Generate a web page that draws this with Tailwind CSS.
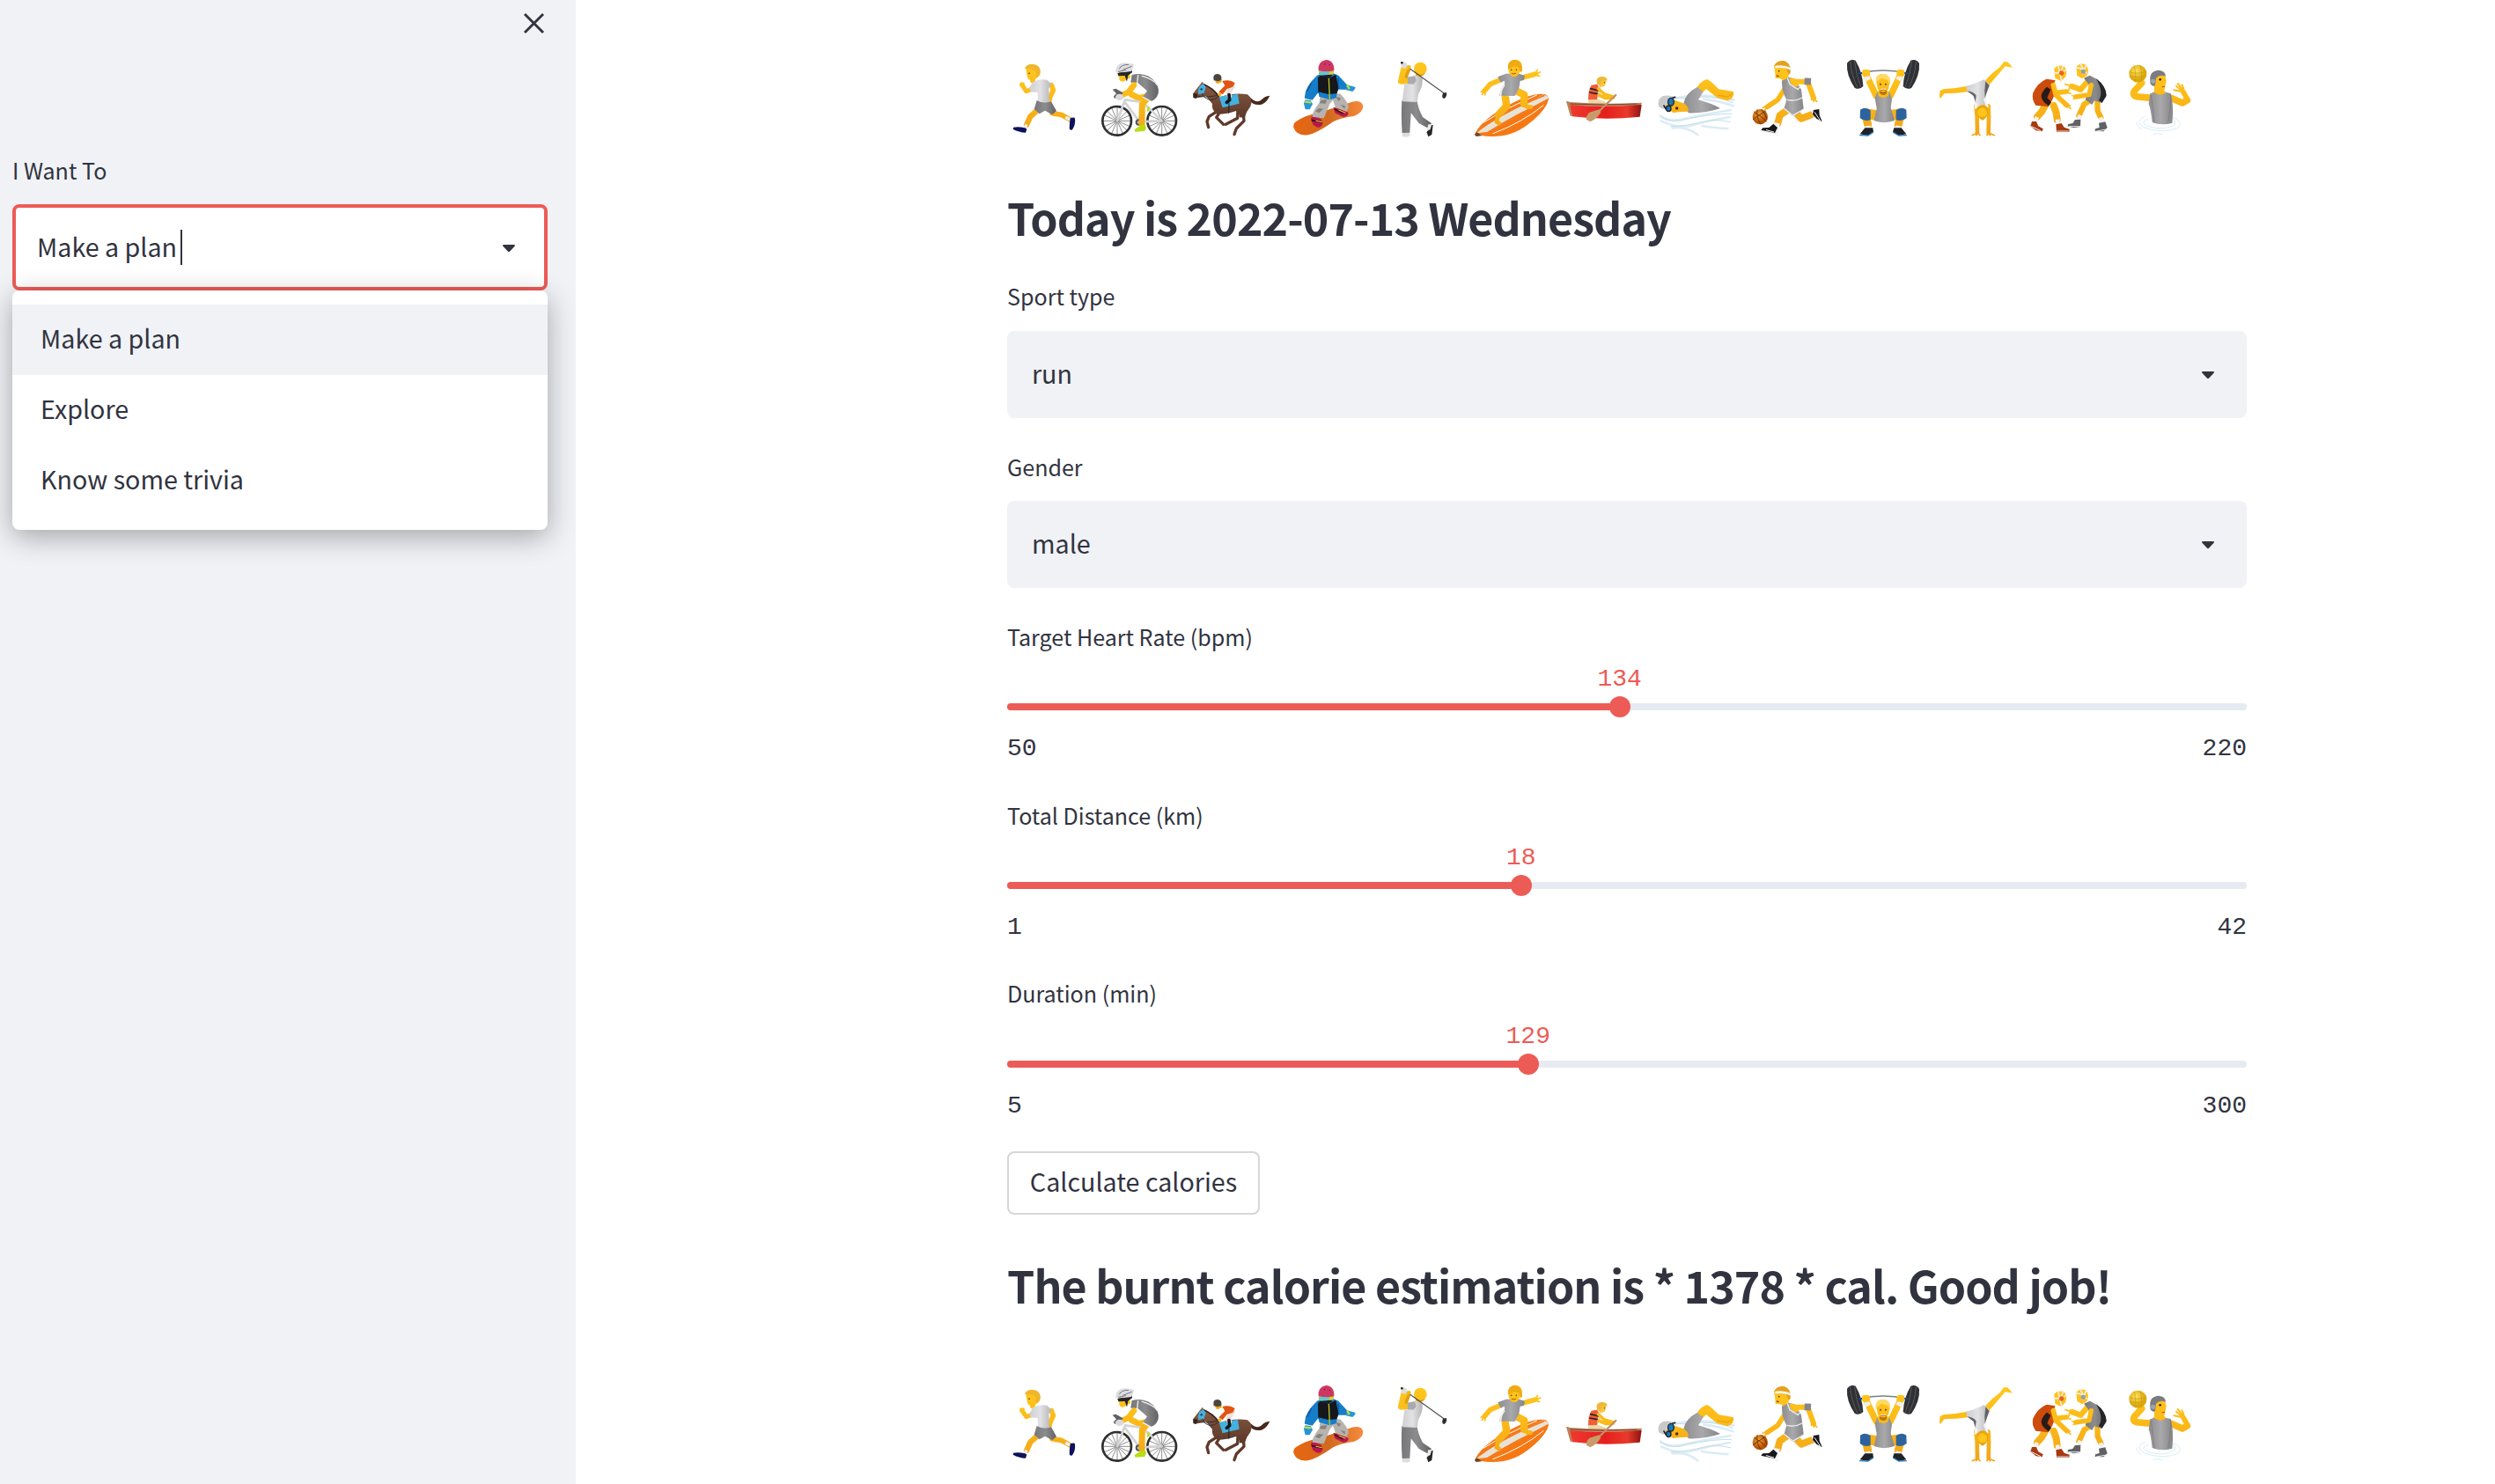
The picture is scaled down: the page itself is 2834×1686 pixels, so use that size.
<!DOCTYPE html>
<html lang="en">
<head>
<meta charset="utf-8">
<title>Workout planner</title>
<script src="https://cdn.jsdelivr.net/npm/@tailwindcss/browser@4"></script>
</head>
<body class="bg-white">
<div class="flex h-[1686px] w-[2834px] overflow-hidden font-['Noto_Sans_CJK_SC',sans-serif] text-[#31333f]">

  <!-- Sidebar -->
  <aside class="flex w-[654px] shrink-0 flex-col bg-[#f0f2f6] pl-[14px] pr-8">
    <div class="flex h-[171px] justify-end pt-[14px]">
      <svg class="mr-[3px] h-[25px] w-[25px]" viewBox="0 0 25 25" fill="none" stroke="#31333f" stroke-width="2.9"><path d="M2 2L23 23M23 2L2 23"/></svg>
    </div>
    <div class="h-[44px] text-[25.07px] leading-[44px]">I Want To</div>
    <div class="relative mt-[17px] flex h-[98px] items-center justify-between rounded-lg border-4 border-[#ed5b56] bg-white pl-[24px] pr-[33px]">
      <div class="flex items-center">
        <span class="-mt-[3px] text-[28.66px] leading-[44px]">Make a plan</span>
        <span class="ml-[4px] h-[40px] w-[2px] bg-[#31333f]"></span>
      </div>
      <svg class="mt-[3px] h-[9px] w-[14px]" viewBox="0 0 14 9"><path fill="#31333f" d="M1 0H13Q14.6 .5 13.4 2L8.200 7.600Q7 8.800 5.800 7.600L.6 2Q-.6 .5 1 0Z"/></svg>
      <ul class="absolute -left-1 top-[94px] w-[608px] rounded-lg bg-white py-4 text-[28.66px] shadow-[0_8px_32px_rgba(0,0,0,0.32)]">
        <li class="h-20 bg-[#f0f2f6] pl-[32px] leading-[76px]">Make a plan</li>
        <li class="h-20 pl-[32px] leading-[76px]">Explore</li>
        <li class="h-20 pl-[32px] leading-[76px]">Know some trivia</li>
      </ul>
    </div>
  </aside>

  <!-- Main column -->
  <main class="flex flex-col pl-[490px] pt-[50px]">
    <div class="flex h-[120px] w-[1408px]">
      <svg class="h-[120px] w-[105px] shrink-0" viewBox="42 0 315 360">
        <defs>
          <linearGradient id="skin" gradientUnits="userSpaceOnUse" x1="0" y1="50" x2="0" y2="320"><stop offset="0" stop-color="#ffc81e"/><stop offset=".5" stop-color="#fbb917"/><stop offset="1" stop-color="#f0a31a"/></linearGradient>
          <linearGradient id="shirt" x1="0" y1="0" x2="1" y2="0"><stop offset="0" stop-color="#cfcfd2"/><stop offset=".5" stop-color="#e2e2e4"/><stop offset="1" stop-color="#b5b5b8"/></linearGradient>
          <linearGradient id="grey" x1="0" y1="0" x2="1" y2="0"><stop offset="0" stop-color="#8d8d90"/><stop offset=".5" stop-color="#a9a9ac"/><stop offset="1" stop-color="#858588"/></linearGradient>
          <linearGradient id="dark" x1="0" y1="0" x2="1" y2="0"><stop offset="0" stop-color="#77777a"/><stop offset=".5" stop-color="#8c8c8f"/><stop offset="1" stop-color="#626265"/></linearGradient>
          <linearGradient id="horse" x1="0" y1="0" x2="0" y2="1"><stop offset="0" stop-color="#8a5c45"/><stop offset="1" stop-color="#5c3828"/></linearGradient>
          <linearGradient id="board" x1="0" y1="0" x2="1" y2="0"><stop offset="0" stop-color="#e8660f"/><stop offset=".5" stop-color="#d2691f"/><stop offset="1" stop-color="#f58a3b"/></linearGradient>
          <linearGradient id="boat" x1="0" y1="0" x2="1" y2="0"><stop offset="0" stop-color="#f03a30"/><stop offset=".5" stop-color="#e51f1d"/><stop offset=".8" stop-color="#e93a2b"/><stop offset="1" stop-color="#8e1210"/></linearGradient>
          <radialGradient id="orangeball" cx=".4" cy=".35"><stop offset="0" stop-color="#f7a22d"/><stop offset="1" stop-color="#b95406"/></radialGradient>
          <radialGradient id="yellowball" cx=".4" cy=".35"><stop offset="0" stop-color="#ffe25c"/><stop offset="1" stop-color="#dba90e"/></radialGradient>
        </defs>
        <g id="runner" stroke-linecap="round" stroke-linejoin="round">
          <g fill="none" stroke="url(#skin)"><path stroke-width="15" d="M95 143L107 161L124 155"/><path stroke-width="17" d="M193 140L199 157L184 190"/><path stroke-width="19" d="M146 225L121 247L108 276"/><path stroke-width="17" d="M195 236L226 241L256 257"/><path stroke-width="18" d="M128 100L129 124"/></g>
          <circle cx="93" cy="139" r="9" fill="#fdc01c"/><circle cx="183" cy="192" r="11" fill="#f8b514"/>
          <path fill="url(#shirt)" d="M131 128Q152 117 178 122L193 137L184 151L186 198Q165 206 147 196L146 165L122 163L117 150Z"/>
          <path fill="url(#dark)" d="M143 192Q165 205 192 196L210 228L196 241L171 227L152 238L134 222Z"/>
          <path fill="url(#skin)" d="M106 86Q104 70 128 69Q155 70 155 96Q152 118 128 122Q112 126 110 108Z"/>
          <path fill="#efb52e" d="M102 84Q108 67 130 69Q157 72 155 98Q153 112 141 113Q143 90 131 88Q120 84 102 84Z"/>
          <circle cx="117" cy="100" r="2.500" fill="#5b3b10"/>
          <path stroke="#eee" stroke-width="11" fill="none" d="M106 279L103 286M245 252L256 257"/>
          <path fill="#0d125c" d="M63 284Q80 280 103 286L109 290L105 302Q82 301 62 290ZM257 253Q272 248 273 254Q276 275 263 293L255 292Q253 280 257 253Z"/>
        </g>
      </svg>
      <svg class="h-[120px] w-[105px] shrink-0" viewBox="357 0 315 360">
        <g id="cyclist" stroke-linecap="round" stroke-linejoin="round">
          <g fill="none" stroke="#77777a" stroke-width="2.500"><path d="M370 262H464M417 216V308M383 229L451 295M451 229L383 295M398 218L436 305M436 218L398 305M374 243L460 281M374 281L460 243"/><path d="M522 262H616M569 216V308M535 229L603 295M603 229L535 295M550 218L588 305M588 218L550 305M526 243L612 281M526 281L612 243"/></g>
          <g fill="none" stroke="#303032" stroke-width="8"><circle cx="416" cy="262" r="49"/><circle cx="569" cy="262" r="49"/></g>
          <path fill="none" stroke="url(#skin)" stroke-width="21" d="M532 174L492 185L466 172"/>
          <path fill="none" stroke="#d3d3d6" stroke-width="8" d="M417 262L444 190L505 198L491 262L443 198M521 214L569 262L495 265M509 196L518 214"/>
          <circle cx="490" cy="267" r="11" fill="#555"/><circle cx="490" cy="267" r="5" fill="#bbb"/>
          <path fill="none" stroke="url(#skin)" stroke-width="21" d="M526 178L502 205L501 270"/>
          <path fill="url(#dark)" d="M467 105Q520 92 548 132Q566 158 552 180Q540 196 529 194L503 182L519 160L487 132L463 131Z"/>
          <path fill="none" stroke="#efefef" stroke-width="4" d="M502 109Q542 121 553 139M488 107L485 133M505 181L529 194"/>
          <path fill="none" stroke="url(#skin)" stroke-width="20" d="M474 140L456 163L431 176"/>
          <path fill="#626266" d="M401 155L412 152L437 166L430 176L408 186L405 178L414 169Z"/><ellipse cx="425" cy="181" rx="14" ry="11" fill="#dadadd"/>
          <path fill="url(#skin)" d="M418 99L455 91L463 114L450 121L438 128Q422 128 424 113Z"/>
          <path fill="#252529" d="M418 99L442 94L467 86L468 97L454 107L450 128L443 108L421 109Z"/>
          <path fill="#dedee2" d="M412 97Q411 65 442 64L473 68Q475 80 465 93L442 96Z"/><path fill="none" stroke="#77777b" stroke-width="3" d="M424 84Q432 69 455 70M437 88L466 76M421 94L446 89"/>
          <path fill="#b8dc14" d="M476 291L493 280L512 274L516 286L510 297L478 299ZM520 216L527 213L526 227L518 231Z"/>
        </g>
      </svg>
      <svg class="h-[120px] w-[105px] shrink-0" viewBox="672 0 315 360">
        <g id="rider" stroke-linecap="round" stroke-linejoin="round">
          <path fill="none" stroke="#60392a" stroke-width="10" d="M758 229L730 247L723 264L728 284M768 230L755 250L779 274M828 225L827 253L787 274M846 225L849 262L823 288L816 308"/>
          <path fill="#47281d" d="M868 180Q892 205 909 190Q920 177 937 176Q927 199 909 206Q881 212 868 191Z"/>
          <path fill="url(#horse)" d="M700 137L708 128L712 138Q745 150 768 181Q815 165 861 172Q882 188 871 213Q858 228 851 251L833 250Q834 235 822 228Q795 239 757 239Q737 224 741 204L719 177L692 184L676 182L676 168Z"/>
          <path fill="none" stroke="#3a211a" stroke-width="5" d="M712 137Q742 150 762 176"/>
          <path fill="none" stroke="#25262e" stroke-width="2.500" d="M682 176Q724 186 764 173M705 169Q730 210 766 176"/>
          <path fill="#45b1df" d="M698 143L711 135L719 148L713 167L694 172L692 160ZM764 179L828 171L833 203L776 217Z"/><circle cx="704" cy="154" r="3.500" fill="#163646"/>
          <path fill="#33221f" d="M676 168L691 170L687 186L677 184Z"/>
          <path fill="none" stroke="#ece0da" stroke-width="17" d="M811 142L796 166L799 177"/><path fill="none" stroke="#17171b" stroke-width="11" d="M798 173L800 191L790 199"/>
          <path fill="#e15413" d="M775 126Q801 119 818 133L811 146L791 153L776 172L763 163L784 142Z"/><circle cx="766" cy="172" r="6" fill="#f6b019"/>
          <path fill="#efaa15" d="M750 118L771 117L773 130L759 136L752 131Z"/><path fill="#4a4541" d="M746 124Q741 101 760 102Q775 104 772 123L760 127Z"/>
          <path fill="none" stroke="#1a222a" stroke-width="3" d="M798 201L797 235"/>
        </g>
      </svg>
      <svg class="h-[120px] w-[105px] shrink-0" viewBox="27 0 315 360">
        <g id="snowboarder" stroke-linecap="round" stroke-linejoin="round">
          <path fill="url(#board)" d="M67 264Q100 242 152 232Q202 215 244 202Q284 186 294 208Q299 231 263 246Q211 252 182 272Q139 302 107 310Q69 314 58 285Q56 270 67 264Z"/>
          <path fill="#b8184a" d="M122 244L151 256L158 270Q154 286 139 284L124 275L117 254ZM194 215L232 228L245 234Q244 250 225 248L199 235Z"/><path fill="none" stroke="#321329" stroke-width="5" d="M121 260L153 267M199 223L225 236"/><path fill="none" stroke="#dada22" stroke-width="3" d="M135 262L154 266M213 226L234 234"/>
          <path fill="#b7b4af" d="M148 176L216 169Q239 191 246 214L239 230L201 217L192 191L181 205L161 253L122 248Q121 230 146 200Z"/>
          <path fill="#85827e" d="M153 191L172 190L167 203L146 202ZM144 219L160 221L145 235L132 229ZM202 179L220 185L211 196ZM217 206L234 211L232 221Z"/>
          <path fill="#167dc9" d="M138 107L161 96L190 98L211 107L240 139L238 155L209 155L203 184L180 190L145 179L143 164L122 191L96 185Q93 149 138 107Z"/>
          <path fill="none" stroke="#0b589b" stroke-width="4" d="M143 126L144 167M211 119L208 158M118 133Q111 151 103 161"/>
          <path fill="#15171b" d="M141 115L151 105L178 117L202 104L211 151L205 169L177 171L142 163Z"/><path fill="none" stroke="#b7c928" stroke-width="4" d="M178 115L181 188"/>
          <path fill="#2596d5" d="M97 190L116 192L123 205L113 223L98 223L93 203ZM237 138L269 147L267 154L259 162L237 157Z"/><path fill="none" stroke="#c7d936" stroke-width="7" d="M99 197L115 199M242 142L247 151"/>
          <path fill="#211c26" d="M143 98L194 93L189 108L178 117L154 112Z"/><path fill="#d4d329" d="M143 91L195 89L192 104L146 105Z"/><path fill="#61c7d1" d="M145 93L182 94L177 105L149 107Z"/>
          <path fill="#ce3762" d="M143 91Q140 59 168 54Q198 56 196 91Q173 97 143 91Z"/><path fill="none" stroke="#7d1b36" stroke-width="4" d="M164 68L164 69M181 70L181 71"/>
        </g>
      </svg>
      <svg class="h-[120px] w-[105px] shrink-0" viewBox="342 0 315 360">
        <g id="golfer" stroke-linecap="round" stroke-linejoin="round">
          <path fill="none" stroke="url(#skin)" stroke-width="22" d="M435 83L425 126L454 123"/><path fill="none" stroke="#dfa111" stroke-width="11" d="M451 87L442 111"/>
          <path fill="none" stroke="url(#skin)" stroke-width="19" d="M484 105L478 116"/>
          <path fill="url(#dark)" d="M427 192L479 193Q481 217 498 249L528 270L518 288L485 270L458 235L454 303L428 304Q424 241 427 192Z"/>
          <path fill="url(#shirt)" d="M448 112L477 107L497 114Q500 143 483 171L479 198L428 196L436 136L450 136Z"/><path fill="#aaaaad" d="M446 113L471 109L476 126L466 137L447 136Z"/>
          <circle cx="490" cy="84" r="22" fill="url(#skin)"/><path fill="#d9960c" d="M470 91Q485 113 507 99Q494 118 475 104Z"/>
          <path fill="none" stroke="#525257" stroke-width="3.500" d="M426 64L570 167"/><path fill="#2d2e31" d="M567 167L579 165Q582 177 572 186Q560 184 567 167Z"/>
          <path fill="#dedddb" d="M424 68L432 59L444 66L447 77L437 83L425 80Z"/><circle cx="451" cy="79" r="7" fill="#f5b917"/><circle cx="427" cy="64" r="4" fill="#222"/>
          <path fill="#ddd" d="M429 303L452 302L456 312L445 317L428 315Z"/><path fill="#252528" d="M524 277L533 276L529 309L517 316L512 301Z"/><path fill="#e9e9e9" d="M517 274L529 273L524 291L511 298Z"/>
        </g>
      </svg>
      <svg class="h-[120px] w-[105px] shrink-0" viewBox="657 0 315 360">
        <g id="surfer" stroke-linecap="round" stroke-linejoin="round">
          <path fill="#f67813" d="M675 309Q693 266 766 222Q863 164 915 171Q934 180 922 204Q903 240 855 275Q795 321 715 314Z"/>
          <path fill="#e8e2d5" d="M681 304Q744 251 910 172L926 180L922 192Q822 233 718 300Z"/><path fill="none" stroke="#f37b20" stroke-width="6" d="M697 287Q780 228 911 176M711 307Q805 253 923 190"/><path fill="none" stroke="#fff" stroke-width="3" d="M705 268Q780 220 887 174M738 305Q840 266 909 209"/>
          <path fill="#68452b" d="M675 310L682 300L699 313L681 315Z"/>
          <path fill="none" stroke="url(#skin)" stroke-width="17" d="M765 121L728 137L708 160M842 113L884 102"/><path fill="none" stroke="url(#skin)" stroke-width="5" d="M707 158L697 163M708 160L700 172M711 161L710 174M882 100L889 88M884 101L899 96M884 104L896 110"/>
          <path fill="none" stroke="url(#skin)" stroke-width="25" d="M779 178L784 211L757 240M817 160L844 173L843 204"/><path fill="none" stroke="url(#skin)" stroke-width="15" d="M755 242L750 265L758 270M846 205L853 214L866 215"/>
          <path fill="url(#grey)" d="M754 112L782 101L823 100L846 108L843 123L830 126L826 151L812 177L760 176Q763 151 778 134L776 125L764 131Z"/><path fill="none" stroke="#f4f4f5" stroke-width="5" d="M776 141Q764 156 764 175"/>
          <path fill="url(#skin)" d="M789 82Q787 55 814 53Q840 56 836 83L834 98L830 93Q823 111 809 112Q791 110 789 82Z"/><path fill="#efaa14" d="M789 84Q785 56 814 53Q839 58 837 94L830 94L826 80Q814 72 794 83Z"/>
          <circle cx="800" cy="88" r="2.500" fill="#653e13"/><circle cx="817" cy="88" r="2.500" fill="#653e13"/><path fill="none" stroke="#a84d18" stroke-width="3" d="M802 101Q809 104 815 100"/>
        </g>
      </svg>
      <svg class="h-[120px] w-[105px] shrink-0" viewBox="12 0 315 360">
        <g id="rower" stroke-linecap="round" stroke-linejoin="round">
          <path fill="#eadaa9" d="M101 190L132 187L163 198L161 208L104 207Z"/>
          <path fill="#ba8155" d="M27 195L39 198Q160 207 286 200L279 211L38 211Z"/><path fill="url(#boat)" d="M37 208Q155 216 284 207L278 248Q158 261 48 247Z"/><path fill="#b98358" d="M27 195L38 197L48 246L41 245Z"/>
          <path fill="none" stroke="#794733" stroke-width="3" d="M42 204Q153 211 267 204"/>
          <path fill="#d6d6dc" d="M121 139L145 143L145 163L134 187L116 187Z"/><path fill="#f45c35" d="M113 140L133 137L137 148L132 189L102 190Q102 157 113 140Z"/><path fill="none" stroke="#26262b" stroke-width="5" d="M110 152L138 159M107 165L133 170"/>
          <path fill="none" stroke="url(#skin)" stroke-width="11" d="M137 153L157 171L188 180M138 174L160 184L187 183"/>
          <path fill="none" stroke="#c1905f" stroke-width="7" d="M196 174L137 231"/><path fill="#c99b6a" d="M139 223L145 231Q136 253 109 265L96 258Q92 247 106 233Z"/>
          <path fill="#fac63a" d="M135 116Q150 108 164 116L163 128L159 143L145 147L134 137Z"/><path fill="#eeb939" d="M132 137Q125 113 148 111Q167 112 167 124L150 125L145 137Z"/><circle cx="157" cy="131" r="2" fill="#593b16"/>
        </g>
      </svg>
      <svg class="h-[120px] w-[105px] shrink-0" viewBox="327 0 315 360">
        <g id="swimmer" stroke-linecap="round" stroke-linejoin="round" fill="none">
          <path stroke="#dcecf5" stroke-width="8" d="M391 188Q446 170 526 178Q575 190 598 190M496 188Q553 195 596 211M348 245Q377 267 421 257Q500 239 588 225M350 262Q410 291 463 275Q524 258 585 249M389 286Q437 279 475 310M490 279Q538 287 577 288"/>
          <path stroke="#c4deeb" stroke-width="3" d="M390 181Q436 191 490 180Q549 180 595 200M348 248Q389 274 440 255Q525 237 590 238M384 281Q445 279 496 264Q535 254 587 266"/>
          <path fill="url(#grey)" d="M427 203Q431 169 474 146L497 158L477 190Q524 203 552 219Q501 237 443 235Z"/>
          <path fill="url(#skin)" d="M399 192L430 203Q446 215 443 230L419 231L391 234L364 214L369 196Z"/>
          <path fill="#c9c9cc" d="M342 214Q336 187 357 177Q383 171 398 185L375 190L368 216L357 221Z"/><path stroke="#1b202a" stroke-width="5" d="M367 222L360 210M390 183L398 181"/>
          <ellipse cx="384" cy="197" rx="10" ry="13" fill="#177bc0" stroke="#21242b" stroke-width="4"/><ellipse cx="376" cy="220" rx="8" ry="10" fill="#177bc0" stroke="#21242b" stroke-width="4"/>
          <circle cx="404" cy="219" r="5" fill="#542515"/>
          <path fill="url(#skin)" d="M473 146Q490 123 508 120L522 130L547 154L596 162Q601 174 590 187L576 193L540 182L504 153L494 163Z"/>
          <path stroke="#e99b0c" stroke-width="3" d="M545 175L578 180L593 169"/>
        </g>
      </svg>
      <svg class="h-[120px] w-[105px] shrink-0" viewBox="642 0 315 360">
        <g id="basketball" stroke-linecap="round" stroke-linejoin="round">
          <path fill="none" stroke="url(#skin)" stroke-width="17" d="M772 152L748 190L712 214"/><path fill="none" stroke="url(#skin)" stroke-width="18" d="M798 128L850 128L870 184"/><path fill="none" stroke="#85858a" stroke-width="23" stroke-linecap="butt" d="M839 127L861 128"/>
          <path fill="none" stroke="url(#skin)" stroke-width="5" d="M711 211L697 217M711 214L704 225M870 180L862 190M870 184L881 196M870 184L871 196"/>
          <path fill="none" stroke="url(#skin)" stroke-width="24" d="M784 223L755 243L748 270M812 237L828 254L863 241"/>
          <circle cx="688" cy="248" r="26" fill="url(#orangeball)"/><path fill="none" stroke="#5a2d0b" stroke-width="2.500" d="M668 232Q692 246 709 263M678 224Q674 251 690 273M706 229Q685 241 664 257M693 223Q707 239 711 256"/>
          <path fill="url(#grey)" d="M762 125L778 111L805 118L828 155L836 220Q818 244 798 246L769 221L778 190Q761 162 762 125Z"/>
          <path fill="url(#skin)" d="M788 118Q801 112 815 125L819 144L805 145L791 132Z"/><path fill="none" stroke="#eee" stroke-width="4" d="M779 111L789 137L817 155L822 148M781 190Q806 197 831 183M770 220L799 244L835 223"/>
          <path fill="url(#skin)" d="M735 76Q742 58 765 57Q792 64 788 93L784 113L768 124L755 118L740 117L739 99Z"/><path fill="#e3a21c" d="M735 76Q743 55 770 57Q797 68 790 101L785 104L776 83L746 72Z"/><path fill="none" stroke="#f2f2f2" stroke-width="8" d="M742 78Q768 74 790 84"/><circle cx="752" cy="92" r="2.500" fill="#5b3810"/><path fill="none" stroke="#743714" stroke-width="4" d="M745 108L750 110"/>
          <path fill="#f4f4f4" d="M737 267L755 271L747 314L693 296L695 290L717 292ZM862 228L878 223L899 260L891 270L868 244Z"/><path fill="#17171a" d="M733 272L747 285L738 303L691 293L697 286L718 285ZM870 225L889 222L890 243L899 264L881 255L867 240Z"/><path fill="none" stroke="#fff" stroke-width="3" d="M709 293L734 300M874 233L892 260"/>
        </g>
      </svg>
      <svg class="h-[120px] w-[105px] shrink-0" viewBox="27 0 315 360">
        <g id="lifter" stroke-linecap="round" stroke-linejoin="round">
          <path fill="none" stroke="#7b7f84" stroke-width="5" d="M100 100Q175 80 257 100"/>
          <path fill="#303134" d="M54 66Q65 49 83 56Q107 97 109 144Q96 158 80 149Q51 106 54 66Z"/><path fill="none" stroke="#58595c" stroke-width="3" d="M65 61Q68 105 89 147M80 59Q85 105 101 146"/>
          <path fill="#303134" d="M300 66Q289 49 271 56Q247 97 245 144Q258 158 274 149Q303 106 300 66Z"/><path fill="none" stroke="#58595c" stroke-width="3" d="M289 61Q286 105 265 147M274 59Q269 105 253 146"/>
          <path fill="none" stroke="url(#skin)" stroke-width="22" d="M120 107L153 176M235 107L202 176"/><path fill="none" stroke="#efefef" stroke-width="22" stroke-linecap="butt" d="M118 110L126 124M238 110L230 124"/>
          <path fill="none" stroke="#0d4ca2" stroke-width="6" d="M96 100L105 99M249 99L259 100"/><rect x="105" y="87" width="27" height="23" rx="8" fill="url(#skin)"/><rect x="223" y="87" width="27" height="23" rx="8" fill="url(#skin)"/>
          <path fill="none" stroke="url(#skin)" stroke-width="35" d="M150 242L122 238M204 242L232 238"/><path fill="none" stroke="url(#skin)" stroke-width="27" d="M118 245L125 275M236 245L229 275"/>
          <path fill="url(#grey)" d="M149 185L156 165L199 165L207 187L203 217L216 261Q179 274 146 261L155 220Z"/>
          <path fill="url(#skin)" d="M157 160L198 160L193 178Q177 188 162 178Z"/><path fill="#7f370c" opacity=".55" d="M163 158L190 158L188 170Q176 178 166 169Z"/>
          <path fill="url(#skin)" d="M153 122Q154 102 177 102Q201 104 200 128L195 154Q178 172 159 155Z"/><path fill="#ffda65" d="M153 138Q146 101 177 102Q206 105 200 140L194 123L171 116L158 126Z"/><circle cx="168" cy="137" r="3" fill="#6c3d10"/><circle cx="186" cy="137" r="3" fill="#6c3d10"/><path fill="none" stroke="#fff" stroke-width="4" d="M171 154H184"/><path fill="none" stroke="#a4441e" stroke-width="2" d="M169 158Q178 152 187 158"/>
          <path fill="#2c639f" d="M99 224Q116 212 134 226L134 258Q113 266 98 252ZM256 224Q239 212 221 226L221 258Q242 266 257 252Z"/>
          <path fill="none" stroke="#f1f1f1" stroke-width="19" stroke-linecap="butt" d="M124 279L126 291M230 279L228 291"/><path fill="#1f2227" d="M98 307L115 286L142 286L144 300L126 312ZM256 307L239 286L214 286L210 300L230 312Z"/><path fill="none" stroke="#287cc5" stroke-width="4" d="M98 311L126 312L142 301M256 311L230 312L212 301"/>
        </g>
      </svg>
      <svg class="h-[120px] w-[105px] shrink-0" viewBox="342 0 315 360">
        <g id="cartwheel" stroke-linecap="round" stroke-linejoin="round">
          <path fill="url(#skin)" d="M465 143L467 163Q422 169 385 169L372 186Q367 183 371 160L382 154Q420 152 465 143ZM525 124Q550 96 575 79L588 61L600 61Q614 72 616 80L593 76Q566 108 539 139Z"/>
          <path fill="none" stroke="url(#skin)" stroke-width="14" d="M493 211L497 246L498 302M536 211L537 246L536 302"/><path fill="none" stroke="url(#skin)" stroke-width="5" d="M496 304L481 311M498 304L494 311M500 304L507 311M534 304L531 311M537 304L542 311M537 303L556 311"/>
          <path fill="url(#shirt)" d="M460 143Q490 136 521 121L539 141L528 162L525 190L535 216L516 211L492 219L488 175L463 163Z"/><path fill="#626267" d="M526 127L539 141L524 183L523 159ZM463 160Q488 164 494 176L491 197L485 177Z"/><path fill="none" stroke="#f5f5f7" stroke-width="8" d="M494 205L492 217M523 188L532 213"/>
          <path fill="#e8a40d" d="M496 227Q497 209 517 208Q539 212 534 237Q529 253 516 260Q498 252 496 227Z"/><circle cx="515" cy="233" r="16" fill="#ffc51b"/>
        </g>
      </svg>
      <svg class="h-[120px] w-[105px] shrink-0" viewBox="657 0 315 360">
        <g id="wrestlers" stroke-linecap="round" stroke-linejoin="round">
          <path fill="none" stroke="url(#skin)" stroke-width="19" d="M876 125L850 155L820 144M886 190L862 205L844 245M907 195L908 228L919 251"/><path fill="none" stroke="url(#skin)" stroke-width="5" d="M817 143L798 137M818 146L810 151"/>
          <path fill="url(#dark)" d="M861 116L881 107L906 120Q938 150 937 179L922 201L897 193L889 207L866 189Q881 152 878 138Z"/><path fill="#252529" d="M903 118Q937 143 938 175L923 200L912 192Q930 164 903 118Z"/>
          <path fill="none" stroke="url(#skin)" stroke-width="16" d="M886 140L879 173L833 180"/><path fill="none" stroke="url(#skin)" stroke-width="4" d="M834 179L820 176M835 183L825 188"/>
          <path fill="url(#skin)" d="M835 79Q845 64 865 69Q882 84 872 107L855 118L838 108Z"/><path fill="none" stroke="#efefef" stroke-width="5" d="M833 82Q852 78 870 99M850 69L862 94M869 71L857 101"/><circle cx="859" cy="94" r="8" fill="#9b9da4"/>
          <path fill="none" stroke="url(#skin)" stroke-width="24" d="M735 198L718 230L702 248M758 210L767 234L770 258"/>
          <path fill="#cc4b0d" d="M734 119L764 124L755 145L765 162L753 192L740 214L697 209Q682 189 688 166Q703 132 734 119Z"/><path fill="#271b18" d="M735 146L748 155L736 183L750 198L741 211Q714 194 716 175Q721 158 735 146Z"/>
          <path fill="none" stroke="url(#skin)" stroke-width="17" d="M757 140L766 174L803 209M763 167L802 162"/><path fill="none" stroke="url(#skin)" stroke-width="5" d="M802 161L812 156M802 164L816 169M802 208L816 220M804 207L815 210"/>
          <path fill="url(#skin)" d="M760 84Q773 68 795 77Q807 93 798 112L783 126L763 116Z"/><path fill="none" stroke="#f1ede5" stroke-width="5" d="M759 98Q780 101 798 90M774 77L784 122M790 75L780 103"/><circle cx="785" cy="99" r="8" fill="#ea6320"/>
          <path fill="none" stroke="#f2f2f2" stroke-width="14" stroke-linecap="butt" d="M702 249L695 264M771 257L773 272M849 242L843 255M918 250L922 266"/>
          <path fill="#a73a11" d="M684 264L699 264L706 280L722 289L719 298L698 295L679 280ZM766 274L785 270L794 284L812 290L811 300L768 300Z"/><path fill="#616064" d="M831 258L850 257L849 282L826 286L805 280L808 273L823 270ZM912 269L934 265L941 285L928 298L899 297L900 289L914 285Z"/><path fill="none" stroke="#eee" stroke-width="3" d="M683 281L714 296M770 297L808 297M811 281L848 281M904 297L938 291"/>
        </g>
      </svg>
      <svg class="h-[120px] w-[105px] shrink-0" viewBox="972 0 315 360">
        <g id="waterpolo" stroke-linecap="round" stroke-linejoin="round">
          <g fill="none" stroke="#d9eef6" stroke-width="3"><path d="M1067 247Q1030 267 1068 285Q1130 307 1181 286Q1205 266 1160 247"/><path d="M1080 255Q1045 270 1087 283Q1136 295 1169 276Q1180 263 1163 255"/><path d="M1097 307Q1111 301 1129 308M1041 267Q1040 281 1056 290"/></g>
          <path fill="none" stroke="url(#skin)" stroke-width="23" d="M1093 184L1049 180Q1022 179 1034 159L1058 133M1154 182L1197 201L1213 191"/><path fill="none" stroke="url(#skin)" stroke-width="17" d="M1214 189L1199 162"/><path fill="none" stroke="url(#skin)" stroke-width="6" d="M1198 156L1181 135M1193 158L1176 143M1190 161L1168 157M1201 151L1195 139"/>
          <circle cx="1045" cy="101" r="30" fill="url(#yellowball)"/><path fill="none" stroke="#c79c16" stroke-width="2" d="M1016 95Q1038 105 1074 94M1032 75Q1039 91 1037 129M1053 73Q1060 94 1057 128M1018 110Q1043 115 1073 109"/>
          <path fill="url(#skin)" d="M1101 140L1134 140L1135 160L1152 172L1146 185L1096 186L1083 173L1101 161Z"/>
          <path fill="url(#grey)" d="M1087 169L1101 165Q1122 182 1141 165L1157 168Q1168 208 1162 269Q1125 279 1094 267Q1089 219 1082 204Z"/><path fill="none" stroke="#75757c" stroke-width="2" d="M1090 176Q1096 211 1101 267M1157 174Q1158 209 1148 266"/>
          <path fill="url(#skin)" d="M1099 102L1135 99L1142 124L1136 155L1117 158L1101 143Z"/><path fill="#7b7c82" d="M1087 125Q1083 92 1115 89Q1139 91 1140 110Q1119 103 1107 116L1104 140L1099 144Q1085 139 1087 125Z"/><circle cx="1097" cy="127" r="8" fill="#9fa2ad"/><circle cx="1121" cy="121" r="4" fill="#38291c"/><path fill="none" stroke="#b15a21" stroke-width="3" d="M1128 146L1136 145"/>
        </g>
      </svg>
    </div>

    <h2 class="mt-[40px] h-[72px] whitespace-nowrap text-[50.1px] leading-[73px] font-bold tracking-[-0.92px]">Today is 2022-07-13 Wednesday</h2>

    <div class="mt-[32px] h-[44px] text-[25.07px] leading-[44px]">Sport type</div>
    <div class="mt-[18px] flex h-[99px] w-[1408px] items-center justify-between rounded-lg bg-[#f0f2f6] pb-px pl-[28px] pr-[37px]">
      <span class="-mt-[3px] text-[28.66px] leading-[44px]">run</span>
      <svg class="mt-[3px] h-[9px] w-[14px]" viewBox="0 0 14 9"><path fill="#31333f" d="M1 0H13Q14.6 .5 13.4 2L8.200 7.600Q7 8.800 5.800 7.600L.6 2Q-.6 .5 1 0Z"/></svg>
    </div>

    <div class="mt-[33px] h-[44px] text-[25.07px] leading-[44px]">Gender</div>
    <div class="mt-[17px] flex h-[99px] w-[1408px] items-center justify-between rounded-lg bg-[#f0f2f6] pb-px pl-[28px] pr-[37px]">
      <span class="-mt-[3px] text-[28.66px] leading-[44px]">male</span>
      <svg class="mt-[3px] h-[9px] w-[14px]" viewBox="0 0 14 9"><path fill="#31333f" d="M1 0H13Q14.6 .5 13.4 2L8.200 7.600Q7 8.800 5.800 7.600L.6 2Q-.6 .5 1 0Z"/></svg>
    </div>

    <!-- Sliders -->
    <div class="mt-[33px] h-[203px] w-[1408px]">
      <div class="h-[44px] text-[25.07px] leading-[44px]">Target Heart Rate (bpm)</div>
      <div class="relative mt-[54px] h-2 rounded-full bg-[#e6eaf1]">
        <div class="h-2 rounded-full bg-[#ed5b56]" style="width:49.41%"></div>
        <div class="absolute -top-2 h-6 w-6 -translate-x-1/2 rounded-full bg-[#ed5b56]" style="left:49.41%"></div>
        <div class="absolute -top-[43px] -translate-x-1/2 font-['Liberation_Mono',monospace] text-[28px] leading-8 text-[#ed5b56]" style="left:49.41%">134</div>
      </div>
      <div class="mt-[28px] flex justify-between font-['Liberation_Mono',monospace] text-[28px] leading-8"><span>50</span><span>220</span></div>
    </div>
    <div class="h-[203px] w-[1408px]">
      <div class="h-[44px] text-[25.07px] leading-[44px]">Total Distance (km)</div>
      <div class="relative mt-[54px] h-2 rounded-full bg-[#e6eaf1]">
        <div class="h-2 rounded-full bg-[#ed5b56]" style="width:41.46%"></div>
        <div class="absolute -top-2 h-6 w-6 -translate-x-1/2 rounded-full bg-[#ed5b56]" style="left:41.46%"></div>
        <div class="absolute -top-[43px] -translate-x-1/2 font-['Liberation_Mono',monospace] text-[28px] leading-8 text-[#ed5b56]" style="left:41.46%">18</div>
      </div>
      <div class="mt-[28px] flex justify-between font-['Liberation_Mono',monospace] text-[28px] leading-8"><span>1</span><span>42</span></div>
    </div>
    <div class="h-[202px] w-[1408px]">
      <div class="-mt-px h-[44px] text-[25.07px] leading-[44px]">Duration (min)</div>
      <div class="relative mt-[55px] h-2 rounded-full bg-[#e6eaf1]">
        <div class="h-2 rounded-full bg-[#ed5b56]" style="width:42.03%"></div>
        <div class="absolute -top-2 h-6 w-6 -translate-x-1/2 rounded-full bg-[#ed5b56]" style="left:42.03%"></div>
        <div class="absolute -top-[43px] -translate-x-1/2 font-['Liberation_Mono',monospace] text-[28px] leading-8 text-[#ed5b56]" style="left:42.03%">129</div>
      </div>
      <div class="mt-[28px] flex justify-between font-['Liberation_Mono',monospace] text-[28px] leading-8"><span>5</span><span>300</span></div>
    </div>

    <button class="-mt-px flex h-[72px] w-[287px] items-center justify-center rounded-lg border-2 border-[#d6d6d9] bg-white pb-[4px] text-[28.66px] leading-[44px] whitespace-nowrap">Calculate calories</button>

    <h2 class="mt-[43px] h-[72px] whitespace-nowrap text-[50.1px] leading-[73px] font-bold tracking-[-0.92px]">The burnt calorie estimation is * 1378 * cal. Good job!</h2>

    <div class="mt-[61px] flex h-[120px] w-[1408px] shrink-0">
      <svg class="h-[120px] w-[105px] shrink-0" viewBox="42 0 315 360"><use href="#runner"/></svg>
      <svg class="h-[120px] w-[105px] shrink-0" viewBox="357 0 315 360"><use href="#cyclist"/></svg>
      <svg class="h-[120px] w-[105px] shrink-0" viewBox="672 0 315 360"><use href="#rider"/></svg>
      <svg class="h-[120px] w-[105px] shrink-0" viewBox="27 0 315 360"><use href="#snowboarder"/></svg>
      <svg class="h-[120px] w-[105px] shrink-0" viewBox="342 0 315 360"><use href="#golfer"/></svg>
      <svg class="h-[120px] w-[105px] shrink-0" viewBox="657 0 315 360"><use href="#surfer"/></svg>
      <svg class="h-[120px] w-[105px] shrink-0" viewBox="12 0 315 360"><use href="#rower"/></svg>
      <svg class="h-[120px] w-[105px] shrink-0" viewBox="327 0 315 360"><use href="#swimmer"/></svg>
      <svg class="h-[120px] w-[105px] shrink-0" viewBox="642 0 315 360"><use href="#basketball"/></svg>
      <svg class="h-[120px] w-[105px] shrink-0" viewBox="27 0 315 360"><use href="#lifter"/></svg>
      <svg class="h-[120px] w-[105px] shrink-0" viewBox="342 0 315 360"><use href="#cartwheel"/></svg>
      <svg class="h-[120px] w-[105px] shrink-0" viewBox="657 0 315 360"><use href="#wrestlers"/></svg>
      <svg class="h-[120px] w-[105px] shrink-0" viewBox="972 0 315 360"><use href="#waterpolo"/></svg>
    </div>
  </main>
</div>
</body>
</html>
